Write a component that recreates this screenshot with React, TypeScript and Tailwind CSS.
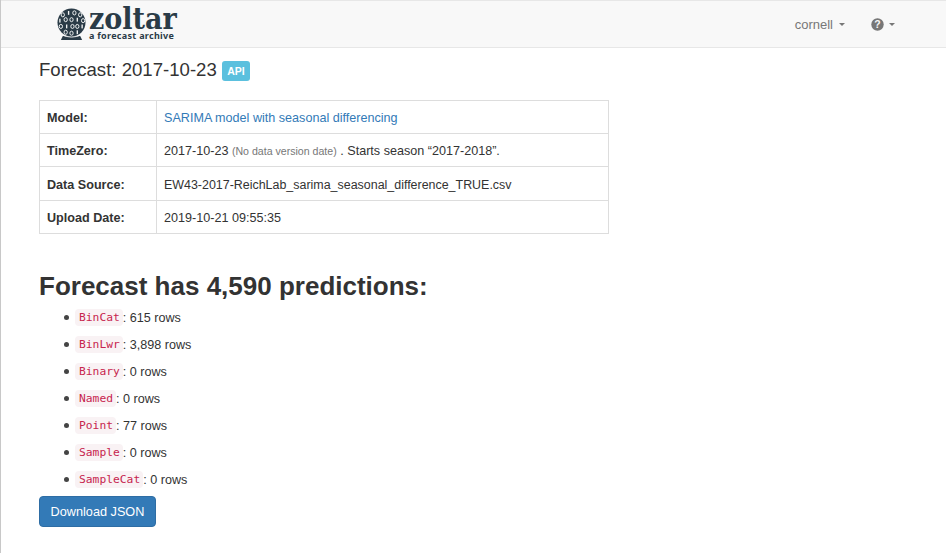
const rows: [string, string][] = [
  ["BinCat", "615 rows"],
  ["BinLwr", "3,898 rows"],
  ["Binary", "0 rows"],
  ["Named", "0 rows"],
  ["Point", "77 rows"],
  ["Sample", "0 rows"],
  ["SampleCat", "0 rows"],
];

function Logo() {
  const dots = [
    [-9, -8], [-3, -10], [3, -10], [9, -8],
    [-12, -2], [-6, -3], [0, -3], [6, -3], [12, -2],
    [-11, 4], [-5, 4], [1, 4], [6, 4], [11, 4],
    [-6, 10], [0, 11], [6, 10],
  ];
  return (
    <svg width="29" height="33" viewBox="-15 -15 30 34" className="shrink-0">
      <circle cx="0" cy="0" r="14.5" fill="#2a3b47" />
      {dots.map(([x, y], i) =>
        i % 3 === 1 ? (
          <rect key={i} x={x - 0.7} y={y - 2} width="1.4" height="4" fill="#f2f4f4" />
        ) : (
          <ellipse key={i} cx={x} cy={y} rx="1.7" ry="2.1" fill="none" stroke="#f2f4f4" strokeWidth="1" />
        )
      )}
      <path d="M-9 14 L9 14 L11 18 L-11 18 Z" fill="#2a3b47" />
      <path d="M-11 12.5 Q0 17.5 11 12.5" fill="none" stroke="#f8f8f8" strokeWidth="1" />
    </svg>
  );
}

function Row({ label, children, h }: { label: string; children: React.ReactNode; h: string }) {
  return (
    <tr className={`border-b border-[#ddd] ${h}`}>
      <th className="w-[117px] border-r border-[#ddd] px-[7px] pt-[1px] text-left font-bold align-middle">{label}</th>
      <td className="px-[7px] pt-[1px] align-middle">{children}</td>
    </tr>
  );
}

export default function App() {
  return (
    <div className="relative h-[553px] w-[946px] overflow-hidden border-l border-[#c8c8c8] bg-white font-['Liberation_Sans',Arial,sans-serif] text-[14px] leading-5 text-[#333]">
      <nav className="flex h-[48px] items-center justify-between border-y border-[#e7e7e7] bg-[#f8f8f8] pl-[56px] pr-[51px]">
        <div className="flex items-center gap-[3px]">
          <Logo />
          <div className="flex flex-col items-start">
            <span className="font-['DejaVu_Serif',serif] text-[30px] font-bold font-stretch-condensed leading-[23px] text-[#2a3b47]">zoltar</span>
            <span className="font-['Noto_Sans',sans-serif] text-[9px] font-bold leading-[11px] tracking-[0.3px] text-[#2a3b47]">a forecast archive</span>
          </div>
        </div>
        <div className="flex items-center pt-[1px] text-[#777]">
          <span className="text-[13px]">cornell</span>
          <span className="ml-[6px] h-0 w-0 border-x-[3.5px] border-t-[3.5px] border-x-transparent border-t-[#777]" />
          <svg width="13" height="13" viewBox="0 0 13 13" className="ml-[26px]">
            <circle cx="6.5" cy="6.5" r="6.2" fill="#777" />
            <text x="6.5" y="10.3" textAnchor="middle" fontSize="10.5" fontWeight="700" fill="#f8f8f8" fontFamily="Liberation Sans">?</text>
          </svg>
          <span className="ml-[5px] h-0 w-0 border-x-[3.5px] border-t-[3.5px] border-x-transparent border-t-[#777]" />
        </div>
      </nav>

      <main className="pl-[38px]">
        <div className="mt-[11px] flex h-[24px] items-center">
          <h1 className="-translate-y-[1px] text-[18.6px] font-normal leading-5">Forecast: 2017-10-23</h1>
          <span className="ml-[5px] rounded-[3px] bg-[#5bc0de] px-[5.5px] py-[4px] text-[10.5px] font-bold leading-[12px] text-white">API</span>
        </div>

        <table className="mt-[17px] w-[570px] border-collapse border border-[#ddd] text-[12.6px]">
          <tbody>
            <Row h="h-[33px]" label="Model:"><a className="text-[#337ab7]">SARIMA model with seasonal differencing</a></Row>
            <Row h="h-[33px]" label="TimeZero:">
              2017-10-23 <span className="text-[10.6px] text-[#777]">(No data version date)</span> . Starts season “2017-2018”.
            </Row>
            <Row h="h-[34px] [&>*]:pt-[2px]" label="Data Source:"><span className="text-[12.45px]">EW43-2017-ReichLab_sarima_seasonal_difference_TRUE.csv</span></Row>
            <Row h="h-[33px]" label="Upload Date:">2019-10-21 09:55:35</Row>
          </tbody>
        </table>

        <h2 className="mt-[36px] text-[26px] font-bold leading-[33px]">Forecast has 4,590 predictions:</h2>

        <ul className="mt-[1px] pl-[25px] text-[12.6px]">
          {rows.map(([name, count]) => (
            <li key={name} className="flex h-[27px] items-center">
              <span className="mr-[6px] h-[5px] w-[5px] rounded-full bg-[#444]" />
              <code className="rounded-[4px] bg-[#f9f2f4] py-[2px] pl-[4px] pr-[3px] font-['DejaVu_Sans_Mono',monospace] text-[11.3px] leading-[13px] text-[#c7254e]">{name}</code>
              <span className="whitespace-pre">: {count}</span>
            </li>
          ))}
        </ul>

        <button className="mt-[3px] h-[31px] w-[117px] rounded-[4px] border border-[#2e6da4] bg-[#337ab7] pt-[1px] text-[12.7px] text-white">Download JSON</button>
      </main>
    </div>
  );
}
